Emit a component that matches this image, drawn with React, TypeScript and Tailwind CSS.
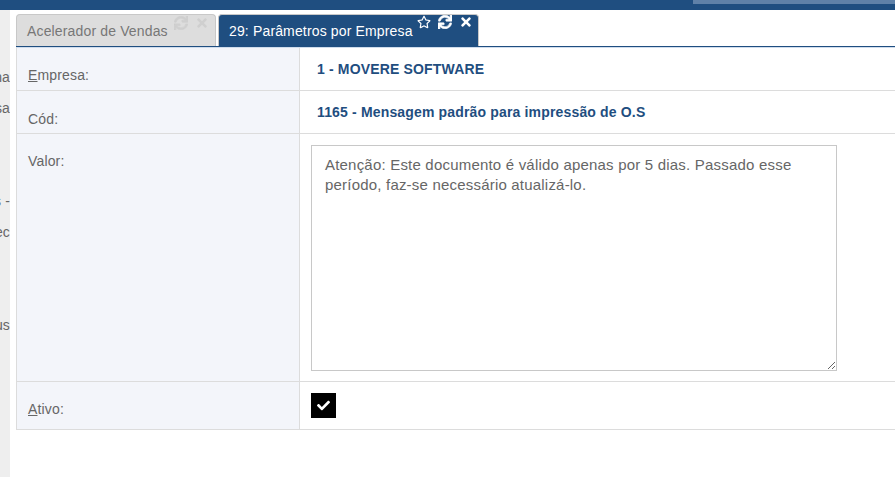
import { FaCheck, FaRegStar, FaSync, FaTimes } from "react-icons/fa";

const sideRows = [
  { text: "na", top: "mt-[57px]" },
  { text: "sa", top: "mt-[11px]" },
  { text: "s -", top: "mt-[73px]" },
  { text: "ec", top: "mt-[11px]" },
  { text: "us", top: "mt-[73px]" },
];

export default function App() {
  return (
    <div className="h-[477px] w-[895px] overflow-hidden bg-white font-['Liberation_Sans',Arial,sans-serif] text-[14px] tracking-[0.15px] text-[#666]">
      {/* top bar */}
      <div className="flex h-[10px] justify-end bg-[#1f4e80]">
        <div className="h-[4px] w-[202px] bg-[#5f81a8]" />
      </div>

      <div className="flex h-[467px]">
        {/* clipped side menu */}
        <div className="flex w-[10px] flex-col items-end overflow-hidden bg-[#eeeeee] text-[#666]">
          {sideRows.map((r) => (
            <div key={r.text} className={`h-[20px] whitespace-nowrap leading-[20px] ${r.top}`}>
              {r.text}
            </div>
          ))}
        </div>

        <div className="ml-[6px] flex-1">
          {/* tabs */}
          <div className="flex h-[37px] items-start gap-[2px] border-b border-[#1f4e80] pt-[4px]">
            <div className="flex h-[32px] w-[200px] rounded-t-[4px] border border-b-0 border-[#c8c8c8] bg-[#dddddd] pl-[10px] text-[#777]">
              <span className="mt-[6px] leading-[20px]">Acelerador de Vendas</span>
              <span className="ml-[6px] mt-[1px] flex gap-[7px] text-[#cfcfcf]">
                <FaSync className="h-[14px] w-[14px]" stroke="currentColor" strokeWidth={24} />
                <FaTimes className="h-[14px] w-[14px]" />
              </span>
            </div>
            <div className="flex h-[32px] w-[261px] rounded-t-[4px] border border-b-0 border-[#c8c8c8] bg-[#1f4e80] pl-[10px] text-white">
              <span className="mt-[6px] leading-[20px]">29: Parâmetros por Empresa</span>
              <span className="ml-[4px] flex gap-[7px]">
                <FaRegStar className="h-[14px] w-[14px]" />
                <FaSync className="h-[14px] w-[14px]" stroke="currentColor" strokeWidth={24} />
                <FaTimes className="h-[14px] w-[14px]" />
              </span>
            </div>
          </div>

          {/* form table */}
          <div className="border-b border-l border-t border-b-[#dcdcdc] border-l-[#dcdcdc] border-t-[#cfdcec]">
            <div className="flex h-[43px] border-b border-[#dcdcdc]">
              <label className="w-[282px] bg-[#f3f5fa] pl-[11px] pt-[17px] leading-[20px]">
                <u>E</u>mpresa:
              </label>
              <div className="flex-1 border-l border-[#dcdcdc] pl-[17px] pt-[11px] text-[#1f4e80] font-bold leading-[20px] tracking-[0.16px]">
                1 - MOVERE SOFTWARE
              </div>
            </div>
            <div className="flex h-[43px] border-b border-[#dcdcdc]">
              <label className="w-[282px] bg-[#f3f5fa] pl-[11px] pt-[18px] leading-[20px]">Cód:</label>
              <div className="flex-1 border-l border-[#dcdcdc] pl-[17px] pt-[11px] text-[#1f4e80] font-bold leading-[20px] tracking-[0.16px]">
                1165 - Mensagem padrão para impressão de O.S
              </div>
            </div>
            <div className="flex h-[248px] border-b border-[#dcdcdc]">
              <label className="w-[282px] bg-[#f3f5fa] pl-[11px] pt-[17px] leading-[20px]">Valor:</label>
              <div className="flex-1 border-l border-[#dcdcdc] pl-[11px] pt-[11px]">
                <textarea
                  readOnly
                  className="block h-[226px] w-[526px] border border-[#c8c8c8] bg-white px-[13px] py-[9px] text-[15px] leading-[20px] tracking-[0.2px] text-[#666] outline-none"
                  value="Atenção: Este documento é válido apenas por 5 dias. Passado esse período, faz-se necessário atualizá-lo."
                />
              </div>
            </div>
            <div className="flex h-[47px]">
              <label className="w-[282px] bg-[#f3f5fa] pl-[11px] pt-[17px] leading-[20px]">
                <u>A</u>tivo:
              </label>
              <div className="flex-1 border-l border-[#dcdcdc] pl-[11px] pt-[11px]">
                <div className="flex h-[25px] w-[25px] items-center justify-center bg-black text-white">
                  <FaCheck className="h-[13px] w-[13px]" />
                </div>
              </div>
            </div>
          </div>
        </div>
      </div>
    </div>
  );
}
